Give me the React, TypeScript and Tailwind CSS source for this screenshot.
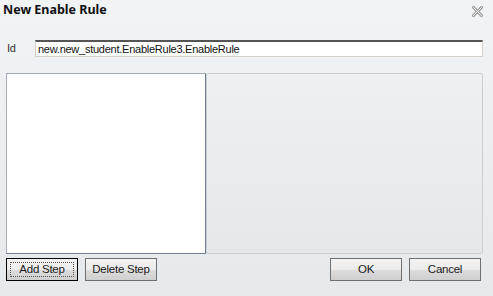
import React from 'react';

const font = { fontFamily: '"Noto Sans", "Open Sans", sans-serif' };
const small = '[font-family:"Liberation_Sans",Arial,sans-serif] text-[11px] tracking-[-0.25px]';

const Btn: React.FC<{ label: string; focused?: boolean; className?: string }> = ({ label, focused, className }) => (
  <button
    className={
      'relative h-[23px] w-[72px] text-[#1a1a1a] border bg-[linear-gradient(#f3f3f3_0%,#ebebeb_50%,#dddddd_51%,#cfcfcf_100%)] ' +
      small + ' ' +
      (focused ? 'border-black ' : 'border-[#707070] ') +
      (className ?? '')
    }
  >
    {focused && <span className="absolute inset-[3px] border border-dotted border-[#555]" />}
    <span className="relative text-[11.5px]">{label}</span>
  </button>
);

const App: React.FC = () => {
  return (
    <div
      className="w-[493px] h-[296px] overflow-hidden flex flex-col bg-[linear-gradient(#f1f3f5,#e6e9ec)] text-[#222]"
      style={font}
    >
      {/* title bar */}
      <div className="h-[18px] flex items-center justify-between pl-[3px] pr-[10px] pt-[2px]">
        <span className="text-[12.5px] font-bold leading-none text-[#111]">New Enable Rule</span>
        <svg width="11" height="11" viewBox="0 0 11 11" className="mt-[3px]">
          <path d="M1.5 1.5 L9.5 9.5 M9.5 1.5 L1.5 9.5" stroke="#9a9a9a" strokeWidth="3" strokeLinecap="square" />
          <path d="M1.5 1.5 L9.5 9.5 M9.5 1.5 L1.5 9.5" stroke="#f4f4f4" strokeWidth="1" strokeLinecap="square" />
        </svg>
      </div>

      {/* id row */}
      <div className="mt-[22px] flex items-center pl-[6px] pr-[10px]">
        <span className={'w-[29px] text-[#333] pl-[1px] ' + small}>Id</span>
        <div className={'flex-1 h-[17px] bg-white border border-[#d4d0c8] border-t-2 border-t-[#555] flex items-center pl-[2px] leading-none text-[#111] ' + small}>
          new.new_student.EnableRule3.EnableRule
        </div>
      </div>

      {/* panels */}
      <div className="mt-[16px] flex pl-[6px] pr-[10px] h-[181px]">
        <div className="w-[200px] bg-white border border-[#a3acb8] border-r-[#6f7f90] border-b-[#6f7f90]" />
        <div className="flex-1 border border-[#cbced2] rounded-[2px] bg-[linear-gradient(#eef0f2,#e5e8eb)]" />
      </div>

      {/* buttons */}
      <div className="mt-[4px] flex pl-[6px] pr-[12px]">
        <Btn label="Add Step" focused />
        <Btn label="Delete Step" className="ml-[7px]" />
        <Btn label="OK" className="ml-auto" />
        <Btn label="Cancel" className="ml-[7px]" />
      </div>
    </div>
  );
};

export default App;
